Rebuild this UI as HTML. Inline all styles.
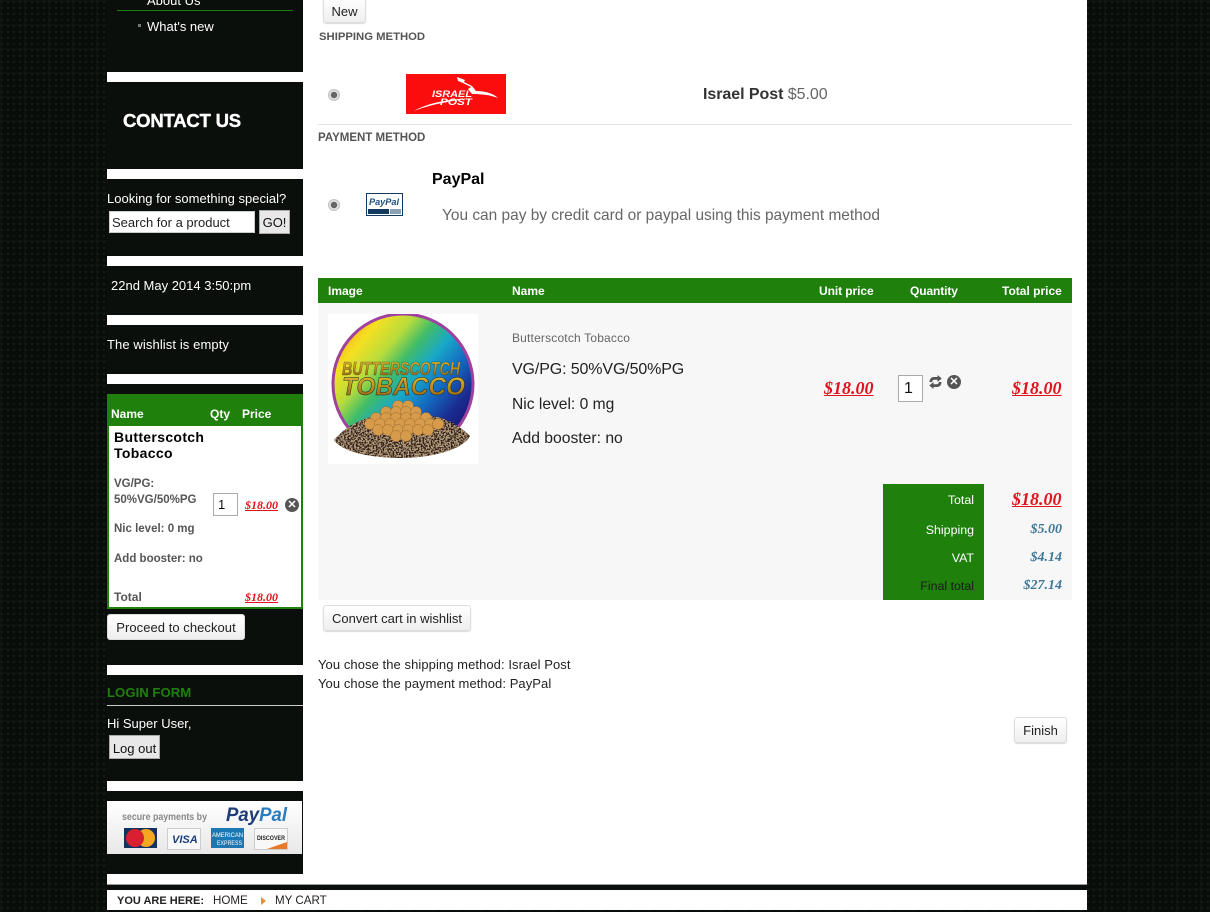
<!DOCTYPE html>
<html><head><meta charset="utf-8"><title>My Cart</title>
<style>
html,body{margin:0;padding:0;width:1210px;height:912px;overflow:hidden}
body{position:relative;font-family:"Liberation Sans",sans-serif;font-size:13px;color:#111;
background-color:#080d0a;
background-image:radial-gradient(circle at 2px 2px,#141d17 1px,transparent 1.4px),linear-gradient(90deg,rgba(30,42,33,.18) 2px,transparent 2px),linear-gradient(rgba(30,42,33,.18) 2px,transparent 2px);
background-size:6px 6px,24px 24px,24px 24px}
div,span,a{position:absolute;white-space:nowrap}
svg{position:absolute;overflow:hidden}
.t{line-height:16px}
.bk{left:107px;width:196px;background:#0a0f0c}
.w{color:#fff}
.btn{background:linear-gradient(#fff,#eee);border:1px solid #ddd;border-radius:3px;box-shadow:0 1px 1px rgba(0,0,0,.15);box-sizing:border-box;text-align:center;color:#222}
.gbtn{background:#e8e8e8;border:1px solid #aaa;box-sizing:border-box;text-align:center;color:#111}
.h{font-weight:bold;color:#555}
.th{font-size:12px;font-weight:bold;color:#fff;line-height:16px}
.p{font-family:"Liberation Serif",serif;font-style:italic;font-weight:bold;color:#e0141e;text-decoration:underline}
.q{font-family:"Liberation Serif",serif;font-style:italic;font-weight:bold;color:#3f7896;font-size:14px;line-height:16px}
.g{color:#555;font-size:11.5px;font-weight:bold;line-height:16px}
.radio{width:12px;height:12px;border-radius:50%;background:radial-gradient(circle,#666 0 3px,#eee 3.5px,#bbb 6px);}
.x{width:14px;height:14px;border-radius:50%;background:#555;color:#fff;font-size:11px;font-weight:bold;line-height:14px;text-align:center}
.num{background:#fff;border:1px solid #aaa;box-sizing:border-box;color:#111;line-height:24px;padding-left:5px}
</style></head><body>

<div style="left:107px;top:0;width:980px;height:884px;background:#fff"></div>
<div style="left:107px;top:884px;width:980px;height:1px;background:#999"></div>
<div style="left:107px;top:885px;width:980px;height:5px;background:#0a0f0c"></div>
<div style="left:107px;top:890px;width:980px;height:20px;background:#fff"></div>

<!-- sidebar blocks -->
<div class="bk" style="top:0;height:72px"></div>
<div class="bk" style="top:82px;height:87px"></div>
<div class="bk" style="top:179px;height:77px"></div>
<div class="bk" style="top:266px;height:49px"></div>
<div class="bk" style="top:325px;height:49px"></div>
<div class="bk" style="top:384px;height:281px"></div>
<div class="bk" style="top:675px;height:106px"></div>
<div class="bk" style="top:791px;height:83px"></div>

<span class="t w" style="left:147px;top:-7px;font-size:13px">About Us</span>
<div style="left:117px;top:10px;width:176px;height:1px;background:#1f7a10"></div>
<div style="left:138px;top:24px;width:3px;height:3px;background:#777"></div>
<span class="t w" style="left:147px;top:19px;font-size:13px">What's new</span>

<span class="w" style="left:123px;top:109px;font-size:18.5px;font-weight:bold;line-height:24px;letter-spacing:-.2px;-webkit-text-stroke:.4px #fff">CONTACT US</span>

<span class="t w" style="left:107px;top:191px">Looking for something special?</span>
<div style="left:109px;top:211px;width:146px;height:22px;background:#fff;border:1px solid #ccc;box-sizing:border-box"></div>
<span class="t" style="left:112px;top:215px;color:#222">Search for a product</span>
<div class="gbtn" style="left:259px;top:210px;width:31px;height:24px;line-height:23px">GO!</div>

<span class="t w" style="left:111px;top:278px">22nd May 2014 3:50:pm</span>
<span class="t w" style="left:107px;top:337px;letter-spacing:.1px">The wishlist is empty</span>

<!-- mini cart -->
<div style="left:107px;top:394px;width:196px;height:215px;background:#fff;border:2px solid #20800c;box-sizing:border-box"></div>
<div style="left:107px;top:394px;width:196px;height:32px;background:#20800c"></div>
<span class="th" style="left:111px;top:406px">Name</span>
<span class="th" style="left:210px;top:406px">Qty</span>
<span class="th" style="left:242px;top:406px">Price</span>
<span style="left:114px;top:429px;font-size:14px;font-weight:bold;line-height:16px;color:#000;letter-spacing:.33px">Butterscotch<br>Tobacco</span>
<span class="g" style="left:114px;top:476px">VG/PG:<br>50%VG/50%PG</span>
<span class="g" style="left:114px;top:521px">Nic level: 0 mg</span>
<span class="g" style="left:114px;top:551px">Add booster: no</span>
<span class="g" style="left:114px;top:589px;font-size:12px">Total</span>
<div class="num" style="left:213px;top:493px;width:25px;height:23px;line-height:22px;font-size:13px;padding-left:4px">1</div>
<span class="p" style="left:245px;top:497px;font-size:12px;line-height:16px">$18.00</span>
<span class="p" style="left:245px;top:589px;font-size:12px;line-height:16px">$18.00</span>
<div class="x" style="left:285px;top:498px">✕</div>
<div class="btn" style="left:107px;top:614px;width:138px;height:26px;line-height:26px;letter-spacing:.05px">Proceed to checkout</div>

<!-- login -->
<span style="left:107px;top:685px;font-size:13.2px;font-weight:bold;line-height:16px;color:#20800c">LOGIN FORM</span>
<div style="left:107px;top:705px;width:196px;height:1px;background:#ccc"></div>
<span class="t w" style="left:107px;top:716px">Hi Super User,</span>
<div class="gbtn" style="left:109px;top:735px;width:51px;height:24px;line-height:25px">Log out</div>

<!-- paypal banner -->
<svg style="left:107px;top:801px" width="195" height="53" viewBox="0 0 195 53">
<defs><linearGradient id="pb" x1="0" y1="0" x2="0" y2="1"><stop offset="0" stop-color="#fff"/><stop offset="1" stop-color="#e8e8e8"/></linearGradient></defs>
<rect width="195" height="53" fill="url(#pb)"/>
<text x="15" y="19" font-family="Liberation Sans" font-size="10" font-weight="bold" fill="#888" textLength="85" lengthAdjust="spacingAndGlyphs">secure payments by</text>
<text x="119" y="20" font-family="Liberation Sans" font-size="19" font-weight="bold" font-style="italic" fill="#1d3c78" textLength="61" lengthAdjust="spacingAndGlyphs">Pay<tspan fill="#2a7cc0">Pal</tspan></text>
<rect x="17" y="27" width="33" height="20" fill="#13325f"/><circle cx="39" cy="37" r="9" fill="#f5a623"/><circle cx="28" cy="37" r="9" fill="#d82030"/>
<rect x="60.500" y="27.500" width="33" height="21" fill="#f8f8f8" stroke="#ccc"/><text x="65" y="42" font-family="Liberation Sans" font-size="11" font-weight="bold" font-style="italic" fill="#1a3f7a">VISA</text>
<rect x="104" y="27" width="33" height="20" fill="#1c78b4"/><text x="105" y="36" font-family="Liberation Sans" font-size="6.5" fill="#fff" textLength="31" lengthAdjust="spacingAndGlyphs">AMERICAN</text><text x="110" y="44" font-family="Liberation Sans" font-size="6.5" fill="#fff" textLength="25" lengthAdjust="spacingAndGlyphs">EXPRESS</text>
<rect x="147.500" y="27.500" width="33" height="21" fill="#f8f8f8" stroke="#ccc"/><text x="150" y="39" font-family="Liberation Sans" font-size="6.5" font-weight="bold" fill="#222" textLength="28" lengthAdjust="spacingAndGlyphs">DISCOVER</text><path d="M160 48L180 48L180 41Z" fill="#e8792a"/>
</svg>

<!-- main -->
<div class="btn" style="left:323px;top:-3px;width:43px;height:26px;line-height:27px">New</div>
<span class="h" style="left:319px;top:29px;line-height:16px;font-size:11.3px">SHIPPING METHOD</span>
<div class="radio" style="left:328px;top:89px"></div>
<svg style="left:406px;top:74px" width="100" height="40" viewBox="0 0 100 40">
<rect width="100" height="40" fill="#fb0d0d"/>
<path d="M8 37C22 29 42 25 64 24.500C44 27 26 30 8 37Z" fill="#fff"/>
<path d="M51 3L59 6L58 8L66 12L70 17C78 17 87 19 92 24C84 21 76 20 66 20L62 15L65 13L57 9L52 7Z" fill="#fff"/>
<text x="26" y="23" font-family="Liberation Sans" font-size="9" font-weight="bold" font-style="italic" fill="#fff" textLength="40" lengthAdjust="spacingAndGlyphs">ISRAEL</text>
<text x="34" y="31" font-family="Liberation Sans" font-size="9" font-weight="bold" font-style="italic" fill="#fff" textLength="32" lengthAdjust="spacingAndGlyphs">POST</text>
</svg>
<span style="left:703px;top:85px;font-size:16px;line-height:19px;color:#666;letter-spacing:-.05px"><b style="color:#333">Israel Post</b> $5.00</span>
<div style="left:318px;top:124px;width:754px;height:1px;background:#e4e4e4"></div>
<span class="h" style="left:318px;top:130px;line-height:16px;font-size:11.5px">PAYMENT METHOD</span>
<div class="radio" style="left:328px;top:199px"></div>
<svg style="left:366px;top:193px" width="37" height="23" viewBox="0 0 37 23">
<rect x=".5" y=".5" width="36" height="22" fill="#fff" stroke="#123a5f"/>
<text x="3" y="12" font-family="Liberation Sans" font-size="9.5" font-weight="bold" font-style="italic" fill="#1c5080" textLength="30" lengthAdjust="spacingAndGlyphs">PayPal</text>
<rect x="2" y="16" width="21" height="5" fill="#123a5f"/><rect x="24" y="16" width="11" height="5" fill="#8aa0b4"/>
</svg>
<span style="left:432px;top:170px;font-size:16px;font-weight:bold;line-height:19px;color:#000">PayPal</span>
<span style="left:442px;top:206px;font-size:15.45px;line-height:19px;color:#666">You can pay by credit card or paypal using this payment method</span>

<!-- table -->
<div style="left:318px;top:278px;width:754px;height:25px;background:#20800c"></div>
<div style="left:318px;top:303px;width:754px;height:297px;background:#f7f7f7"></div>
<span class="th" style="left:328px;top:283px">Image</span>
<span class="th" style="left:512px;top:283px">Name</span>
<span class="th" style="left:819px;top:283px;letter-spacing:-.08px">Unit price</span>
<span class="th" style="left:910px;top:283px;letter-spacing:-.1px">Quantity</span>
<span class="th" style="left:1002px;top:283px">Total price</span>

<svg style="left:328px;top:314px" width="150" height="150" viewBox="0 0 150 150">
<defs>
<linearGradient id="rb" x1="0.05" y1="0.1" x2="0.95" y2="0.85"><stop offset="0" stop-color="#f0a020"/><stop offset=".15" stop-color="#f5e020"/><stop offset=".3" stop-color="#b8dc3c"/><stop offset=".42" stop-color="#40bc68"/><stop offset=".55" stop-color="#18a8c8"/><stop offset=".7" stop-color="#1468c0"/><stop offset=".85" stop-color="#1a2c90"/><stop offset="1" stop-color="#1a1070"/></linearGradient>
<linearGradient id="gd" x1="0" y1="0" x2="0" y2="1"><stop offset="0" stop-color="#e8c030"/><stop offset="1" stop-color="#8a5c10"/></linearGradient>
<filter id="sp" x="0" y="0" width="100%" height="100%"><feTurbulence type="fractalNoise" baseFrequency=".6" numOctaves="2" seed="4"/><feColorMatrix values="0 0 0 0 .5 0 0 0 0 .36 0 0 0 0 .22 6 0 0 0 -2.6"/><feComposite in2="SourceGraphic" operator="in"/><feMerge><feMergeNode in="SourceGraphic"/><feMergeNode/></feMerge></filter>
</defs>
<rect width="150" height="150" fill="#fff"/>
<circle cx="75" cy="70" r="70" fill="url(#rb)" stroke="#a040a0" stroke-width="3"/>
<path d="M6 126C16 114 30 106 46 102H104C120 104 134 114 142 122C136 134 110 143 76 144C42 144 14 138 6 126Z" fill="#2e1e14" filter="url(#sp)"/>
<g fill="#d69c4c" stroke="#a06a28" stroke-width=".5">
<circle cx="70" cy="92" r="5.500"/><circle cx="80" cy="92" r="5.500"/>
<circle cx="58" cy="98" r="5.500"/><circle cx="68" cy="98" r="5.500"/><circle cx="78" cy="98" r="5.500"/><circle cx="88" cy="98" r="5.500"/>
<circle cx="48" cy="104" r="5.500"/><circle cx="58" cy="104" r="5.500"/><circle cx="68" cy="104" r="5.500"/><circle cx="78" cy="104" r="5.500"/><circle cx="88" cy="104" r="5.500"/><circle cx="98" cy="104" r="5.500"/>
<circle cx="42" cy="110" r="5.500"/><circle cx="52" cy="110" r="5.500"/><circle cx="62" cy="110" r="5.500"/><circle cx="72" cy="110" r="5.500"/><circle cx="82" cy="110" r="5.500"/><circle cx="92" cy="110" r="5.500"/><circle cx="102" cy="110" r="5.500"/><circle cx="110" cy="110" r="5.500"/>
<circle cx="50" cy="116" r="5.500"/><circle cx="60" cy="116" r="5.500"/><circle cx="70" cy="116" r="5.500"/><circle cx="80" cy="116" r="5.500"/><circle cx="90" cy="116" r="5.500"/><circle cx="100" cy="116" r="5.500"/>
<circle cx="68" cy="122" r="5.500"/><circle cx="78" cy="122" r="5.500"/>
</g>
<text x="14" y="61" font-family="Liberation Sans" font-size="18" font-weight="bold" font-style="italic" fill="url(#gd)" stroke="#222" stroke-width=".3" textLength="118" lengthAdjust="spacingAndGlyphs">BUTTERSCOTCH</text>
<text x="14" y="81" font-family="Liberation Sans" font-size="25" font-weight="bold" font-style="italic" fill="url(#gd)" stroke="#222" stroke-width=".5" textLength="123" lengthAdjust="spacingAndGlyphs">TOBACCO</text>
</svg>

<span class="t" style="left:512px;top:330px;font-size:12px;color:#666;letter-spacing:.18px">Butterscotch Tobacco</span>
<span style="left:512px;top:360px;font-size:16px;line-height:19px;color:#222;letter-spacing:-.12px">VG/PG: 50%VG/50%PG</span>
<span style="left:512px;top:395px;font-size:15.6px;line-height:19px;color:#222">Nic level: 0 mg</span>
<span style="left:512px;top:429px;font-size:15.7px;line-height:19px;color:#222">Add booster: no</span>
<span class="p" style="left:824px;top:378px;font-size:18px;line-height:21px">$18.00</span>
<div class="num" style="left:898px;top:375px;width:25px;height:27px;line-height:26px;font-size:16px;padding-left:5px">1</div>
<svg style="left:929px;top:375px" width="13" height="14" viewBox="0 0 13 14"><path d="M.5 7C.5 3.500 3 2 5 2H8.500V0L12.800 3.500L8.500 7V4.800H5.500C4 4.800 3.500 5.500 3 7ZM12.500 7C12.500 10.500 10 12 8 12H4.500V14L.2 10.500L4.500 7V9.200H7.500C9 9.200 9.500 8.500 10 7Z" fill="#555"/></svg>
<div class="x" style="left:947px;top:375px">✕</div>
<span class="p" style="left:1012px;top:378px;font-size:18px;line-height:21px">$18.00</span>

<div style="left:883px;top:484px;width:101px;height:116px;background:#20800c"></div>
<span style="right:236px;top:492px;font-size:12.4px;line-height:16px;color:#fff">Total</span>
<span style="right:236px;top:522px;font-size:12.4px;line-height:16px;color:#fff">Shipping</span>
<span style="right:236px;top:550px;font-size:12.4px;line-height:16px;color:#fff">VAT</span>
<span style="right:236px;top:578px;font-size:12.4px;line-height:16px;color:#1a1a1a">Final total</span>
<span class="p" style="left:1012px;top:489px;font-size:18px;line-height:21px">$18.00</span>
<span class="q" style="right:148px;top:522px">$5.00</span>
<span class="q" style="right:148px;top:550px">$4.14</span>
<span class="q" style="right:148px;top:578px">$27.14</span>

<div class="btn" style="left:323px;top:605px;width:148px;height:26px;line-height:26px">Convert cart in wishlist</div>
<span class="t" style="left:318px;top:657px;color:#222;letter-spacing:.07px">You chose the shipping method: Israel Post</span>
<span class="t" style="left:318px;top:676px;color:#222;letter-spacing:.07px">You chose the payment method: PayPal</span>
<div class="btn" style="left:1014px;top:717px;width:53px;height:26px;line-height:26px">Finish</div>

<!-- breadcrumb -->
<span style="left:117px;top:894px;font-size:11px;line-height:15px;font-weight:bold;color:#222">YOU ARE HERE:</span>
<span style="left:213px;top:893px;font-size:11.6px;line-height:15px;color:#222">HOME</span>
<div style="left:261px;top:897px;width:0;height:0;border-left:5px solid #e8912a;border-top:4px solid transparent;border-bottom:4px solid transparent"></div>
<span style="left:275px;top:893px;font-size:11.6px;line-height:15px;color:#222">MY CART</span>

</body></html>
